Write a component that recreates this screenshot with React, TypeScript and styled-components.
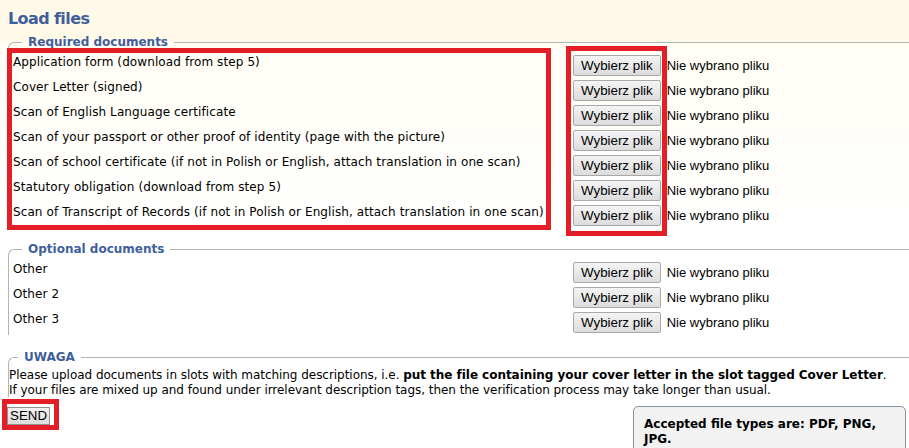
import React from "react";
import styled, { createGlobalStyle } from "styled-components";

const Global = createGlobalStyle`
  html, body {
    margin: 0;
    padding: 0;
    overflow: hidden;
  }
  body {
    background: linear-gradient(#fff9e8 0px, #fff9e8 40px, #fffdf4 44px, #ffffff 230px);
    min-height: 448px;
    font-family: "DejaVu Sans", Verdana, sans-serif;
    color: #000;
  }
`;

const Page = styled.div`
  position: relative;
  width: 901px;
  padding: 0 0 0 8px;
  height: 448px;
`;

const Title = styled.h2`
  margin: 0;
  padding-top: 9px;
  font-size: 16px;
  line-height: 20px;
  font-weight: bold;
  color: #3f5f9c;
  letter-spacing: -0.6px;
`;

const Group = styled.fieldset<{ $gap: number }>`
  margin: ${(p) => p.$gap}px 0 0 0;
  padding: 3px 0 0 4px;
  border: none;
  border-top: 1px solid #b4b4b4;
  border-left: 1px solid #b4b4b4;
  border-top-left-radius: 6px;
  min-width: 0;
`;

const Legend = styled.legend`
  margin-left: 9px;
  padding: 0 6px;
  font-size: 12px;
  line-height: 16px;
  font-weight: bold;
  color: #3f5f9c;
`;

const Rows = styled.div`
  display: grid;
  grid-template-columns: 560px max-content max-content;
  grid-auto-rows: 25px;
  align-items: center;
`;

const Label = styled.span`
  font-size: 12px;
  letter-spacing: 0.1px;
  white-space: nowrap;
  padding-bottom: 7px;
`;

const FileButton = styled.button`
  height: 21px;
  padding: 0 7px;
  font-family: "Liberation Sans", Arial, sans-serif;
  font-size: 13.33px;
  color: #000;
  background: linear-gradient(#f4f4f4, #dcdcdc);
  border: 1px solid #a9a9a9;
  border-radius: 2px;
`;

const Status = styled.span`
  margin-left: 6px;
  font-family: "Liberation Sans", Arial, sans-serif;
  font-size: 13px;
  white-space: nowrap;
`;

const NoteGroup = styled(Group)`
  padding: 3px 0 0 0;
`;

const Note = styled.p`
  margin: 0;
  font-size: 12px;
  line-height: 14.5px;
  letter-spacing: -0.04px;
  white-space: nowrap;
`;

const Footer = styled.div`
  display: flex;
  justify-content: space-between;
  align-items: flex-start;
  margin-top: 9px;
  padding-right: 3px;
`;

const SendButton = styled.button`
  margin-left: -1px;
  margin-top: 1px;
  height: 18px;
  padding: 0 2px;
  font-family: "Liberation Sans", Arial, sans-serif;
  font-size: 13.33px;
  line-height: 16px;
  color: #000;
  background: linear-gradient(#f2f2f2, #dddddd);
  border: 1px solid #8f8f8f;
  border-radius: 0;
`;

const InfoBox = styled.div`
  width: 251px;
  padding: 10px 10px 8px 10px;
  background: #f2f2f2;
  border: 1px solid #8393aa;
  border-radius: 5px;
  font-size: 12px;
  line-height: 15px;
  font-weight: bold;
`;

const Mark = styled.div`
  position: absolute;
  border: 5px solid #e31e26;
  pointer-events: none;
`;

const required = [
  "Application form (download from step 5)",
  "Cover Letter (signed)",
  "Scan of English Language certificate",
  "Scan of your passport or other proof of identity (page with the picture)",
  "Scan of school certificate (if not in Polish or English, attach translation in one scan)",
  "Statutory obligation (download from step 5)",
  "Scan of Transcript of Records (if not in Polish or English, attach translation in one scan)",
];

const optional = ["Other", "Other 2", "Other 3"];

function FileRows({ items }: { items: string[] }) {
  return (
    <Rows>
      {items.map((t) => (
        <React.Fragment key={t}>
          <Label>{t}</Label>
          <FileButton type="button">Wybierz plik</FileButton>
          <Status>Nie wybrano pliku</Status>
        </React.Fragment>
      ))}
    </Rows>
  );
}

export default function App() {
  return (
    <>
      <Global />
      <Page>
        <Title>Load files</Title>
        <Group $gap={5}>
          <Legend>Required documents</Legend>
          <FileRows items={required} />
        </Group>
        <Group $gap={13}>
          <Legend>Optional documents</Legend>
          <FileRows items={optional} />
        </Group>
        <NoteGroup $gap={14}>
          <Legend>UWAGA</Legend>
          <Note>
            Please upload documents in slots with matching descriptions, i.e.{" "}
            <b>put the file containing your cover letter in the slot tagged Cover Letter</b>.
          </Note>
          <Note>
            If your files are mixed up and found under irrelevant description tags, then the
            verification process may take longer than usual.
          </Note>
        </NoteGroup>
        <Footer>
          <SendButton type="submit">SEND</SendButton>
          <InfoBox>Accepted file types are: PDF, PNG, JPG.</InfoBox>
        </Footer>
        <Mark style={{ left: 7, top: 48, width: 534, height: 172 }} />
        <Mark style={{ left: 566, top: 46, width: 91, height: 180 }} />
        <Mark style={{ left: 2, top: 399, width: 47, height: 21 }} />
      </Page>
    </>
  );
}
